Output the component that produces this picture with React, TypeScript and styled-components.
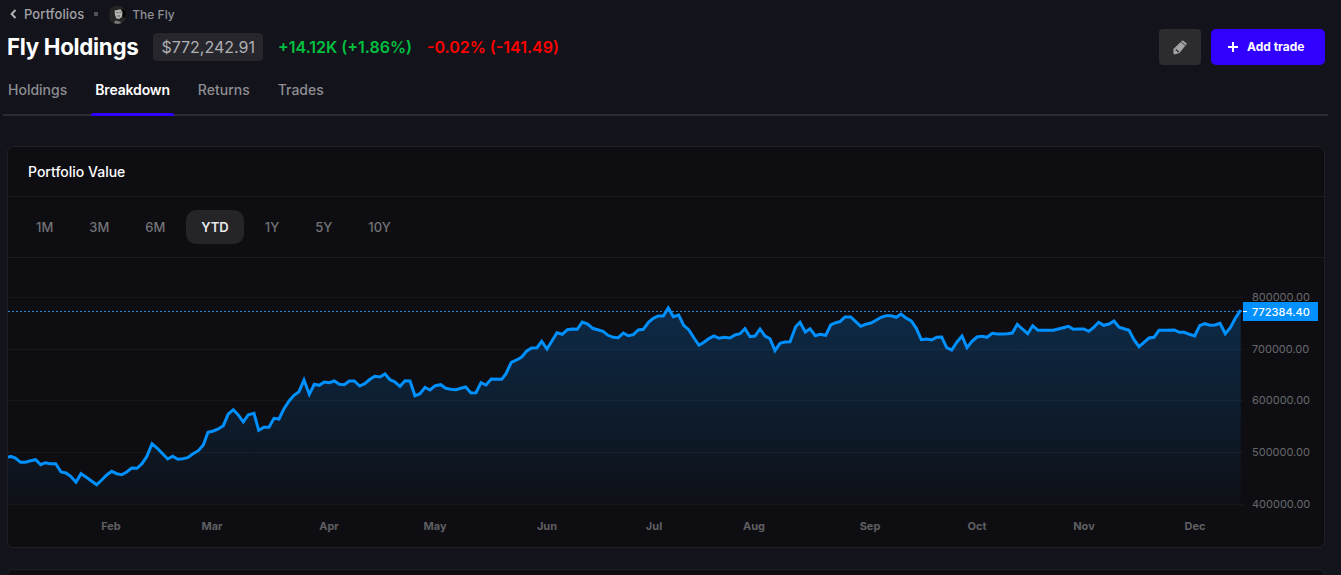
import React from "react";
import styled, { createGlobalStyle } from "styled-components";

const Global = createGlobalStyle`
  html, body { margin: 0; padding: 0; background: #13131b; overflow: hidden; }
  body { font-family: Inter, "Noto Sans", sans-serif; -webkit-font-smoothing: antialiased; }
  * { box-sizing: border-box; }
`;

const Page = styled.div`
  width: 1341px;
  height: 575px;
  overflow: hidden;
  background: #13131b;
  padding: 0 16px 0 7px;
`;
const Crumbs = styled.div`
  display: flex;
  align-items: center;
  height: 28px;
  padding-left: 3px;
  font-size: 12px;
  font-weight: 500;
  color: #a2a2a6;
`;
const CrumbLink = styled.span`
  margin-left: 7px;
  font-size: 13px;
  letter-spacing: 0.1px;
`;
const Dot = styled.span`
  width: 4px;
  height: 4px;
  border-radius: 1px;
  background: #55555b;
  margin: 0 10px 0 10px;
`;
const Owner = styled.span`
  margin-left: 5px;
  color: #8f8f94;
`;
const TitleRow = styled.div`
  display: flex;
  align-items: center;
  height: 38px;
`;
const Title = styled.h1`
  margin: 0 15px 0 0;
  font-size: 22.3px;
  line-height: 38px;
  font-weight: 700;
  letter-spacing: -0.3px;
  color: #fff;
  white-space: nowrap;
`;
const ValueBadge = styled.span`
  height: 28px;
  line-height: 28px;
  padding: 0 8px;
  border-radius: 4px;
  background: #26262c;
  color: #b0b0b4;
  font-size: 16px;
  margin-right: 15px;
`;
const Change = styled.span<{ $up?: boolean }>`
  font-size: 16px;
  font-weight: 600;
  color: ${(p) => (p.$up ? "#00c040" : "#ff0000")};
  margin-right: 15px;
  white-space: nowrap;
`;
const Actions = styled.div`
  margin-left: auto;
  display: flex;
  gap: 10px;
`;
const IconButton = styled.button`
  width: 42px;
  height: 36px;
  border: 0;
  border-radius: 4px;
  background: #2b2b30;
  display: flex;
  align-items: center;
  justify-content: center;
  padding: 0;
`;
const PrimaryButton = styled.button`
  width: 114px;
  height: 36px;
  border: 0;
  border-radius: 5px;
  background: #3200ff;
  color: #fff;
  font: 700 12px Inter, sans-serif;
  display: flex;
  align-items: center;
  gap: 9px;
  padding: 0 0 1px 17px;
`;
const Tabs = styled.nav`
  display: flex;
  margin: 7px -3px 0 -4px;
  padding-left: 1px;
  height: 43px;
  border-bottom: 2px solid #2c2c31;
`;
const Tab = styled.span<{ $active?: boolean }>`
  position: relative;
  padding: 0 4px 10px;
  margin: 0 20px 0 0;
  height: 43px;
  display: flex;
  align-items: center;
  font-size: 14px;
  font-weight: ${(p) => (p.$active ? 600 : 500)};
  letter-spacing: ${(p) => (p.$active ? "-0.15px" : "0")};
  color: ${(p) => (p.$active ? "#fff" : "#8d8d92")};
  ${(p) =>
    p.$active
      ? `&::after { content: ""; position: absolute; left: 0; right: 0; bottom: 0; height: 3px; border-radius: 2px 2px 0 0; background: #3200ff; }`
      : ""}
`;
const Card = styled.section`
  margin-top: 30px;
  width: 1318px;
  height: 402px;
  background: #0e0e12;
  border: 1px solid #1f1f26;
  border-radius: 6px;
  overflow: hidden;
`;
const CardHeader = styled.div`
  height: 50px;
  padding-left: 20px;
  display: flex;
  align-items: center;
  border-bottom: 1px solid #1b1b20;
  font-size: 14px;
  font-weight: 500;
  color: #fff;
`;
const Ranges = styled.div`
  height: 61px;
  padding: 0 13px;
  display: flex;
  align-items: center;
  gap: 6px;
  border-bottom: 1px solid #1b1b20;
`;
const Range = styled.span<{ $active?: boolean }>`
  height: 34px;
  line-height: 34px;
  padding: 0 15px;
  border-radius: 10px;
  font-size: 13px;
  font-weight: ${(p) => (p.$active ? 600 : 500)};
  background: ${(p) => (p.$active ? "#252528" : "transparent")};
  color: ${(p) => (p.$active ? "#e8e8ea" : "#737377")};
`;
const Chart = styled.svg`
  display: block;
  width: 1316px;
  height: 289px;
  font-family: Inter, sans-serif;
`;
const NextCard = styled.section`
  margin-top: 21px;
  width: 1318px;
  height: 40px;
  background: #0e0e12;
  border: 1px solid #1f1f26;
  border-radius: 6px;
`;

const a: number[][] = [[24,472],[32,469],[46,474],[62,487],[76,487],[92,482],[107,479],[122,494],[136,488],[150,491],[167,491],[183,516],[198,519],[212,529],[228,547],[243,521],[259,532],[290,554],[305,540],[320,525],[335,514],[350,521],[365,524],[380,516],[395,504],[411,505],[426,491],[440,470],[456,431],[472,445],[503,477],[518,469],[533,478],[548,476],[563,473],[578,462],[595,452],[610,435],[624,397],[640,393],[655,387],[670,377],[685,342],[700,329],[715,345],[730,366],[745,344],[762,340],[776,391],[792,382],[807,382],[822,355],[837,357],[852,326],[868,302],[882,286],[897,275],[912,240],[928,283],[943,253],[958,256],[973,246],[988,248],[1003,243],[1018,253],[1033,254],[1048,243],[1063,243],[1079,258],[1094,251],[1110,238],[1124,229],[1140,231],[1155,222],[1170,239],[1185,246],[1200,259],[1215,242],[1230,243],[1245,287]];
const b: number[][] = [[0,296],[15,277],[30,285],[46,272],[62,269],[77,280],[92,283],[108,284],[122,280],[137,276],[153,294],[168,293],[183,263],[198,270],[214,252],[245,253],[258,236],[274,202],[290,195],[305,186],[320,168],[335,159],[351,158],[365,139],[381,162],[411,113],[427,118],[442,104],[457,102],[472,103],[487,81],[503,87],[518,100],[533,104],[549,109],[564,121],[580,127],[595,128],[610,114],[625,122],[640,119],[655,105],[670,103],[686,81],[700,70],[715,63],[730,63],[745,39],[760,65],[776,60],[791,91],[806,104],[822,129],[837,151],[852,142],[868,130],[882,123],[897,130],[913,127],[930,129],[945,120],[960,116],[975,101],[990,125],[1005,123],[1020,102],[1035,123],[1050,131],[1065,167],[1080,145],[1095,141],[1110,140],[1127,95],[1140,82],[1156,111],[1170,101],[1186,122],[1200,118],[1217,121],[1232,90],[1247,83]];
const c: number[][] = [[0,80],[15,66],[32,66],[47,80],[62,94],[77,88],[93,84],[108,76],[123,67],[138,62],[153,62],[169,67],[183,57],[198,69],[214,78],[229,100],[244,134],[260,132],[275,135],[290,127],[305,126],[320,158],[335,165],[351,141],[366,123],[381,158],[396,139],[411,126],[426,124],[441,127],[457,115],[472,117],[487,117],[502,116],[517,114],[532,88],[547,102],[563,116],[578,92],[594,106],[609,106],[640,106],[655,102],[670,98],[685,94],[700,103],[716,102],[731,102],[746,109],[761,97],[776,82],[791,91],[807,87],[822,78],[837,97],[852,101],[867,106],[882,134],[897,155],[912,142],[927,129],[942,127],[957,106],[972,106],[1003,105],[1018,112],[1033,112],[1048,118],[1064,123],[1079,92],[1094,86],[1110,91],[1125,90],[1140,85],[1156,116],[1171,98],[1186,70],[1202,45]];

const pts = [
  ...a.map(([x, y]) => [x / 3, 300 + y / 3]),
  ...b.map(([x, y]) => [420 + x / 3, 295 + y / 3]),
  ...c.map(([x, y]) => [840 + x / 3, 295 + y / 3]),
].map(([x, y]) => `${x.toFixed(1)},${y.toFixed(1)}`);
const linePath = "M" + pts.join(" L");
const areaPath = `${linePath} L1240.7,504 L8,504 Z`;

const months: [string, number][] = [["Feb",111],["Mar",212],["Apr",329],["May",435],["Jun",547],["Jul",654],["Aug",754],["Sep",870],["Oct",977],["Nov",1084],["Dec",1195]];
const grid: [string, number][] = [["800000.00",297],["700000.00",349],["600000.00",400],["500000.00",452],["400000.00",504]];
const ranges = ["1M", "3M", "6M", "YTD", "1Y", "5Y", "10Y"];
const tabs = ["Holdings", "Breakdown", "Returns", "Trades"];

const Avatar = () => (
  <svg width="19" height="19" viewBox="0 0 19 19" aria-hidden="true">
    <defs>
      <clipPath id="av"><circle cx="9.5" cy="9.5" r="9.5" /></clipPath>
    </defs>
    <g clipPath="url(#av)">
      <rect width="19" height="19" fill="#151515" />
      <path d="M2 4 6 1h7l4 4 2 8-4 6H5L1 15z" fill="#262626" />
      <path d="M6.6 5.5 12.5 4.2 14.4 7.5 13.8 12 11 14 8.4 13.5 7 10z" fill="#b4b4b0" />
      <path d="M8.5 7.5h1.5M11.5 7.5h1.2M9.5 11h2.5" stroke="#3a3a3a" strokeWidth="0.8" />
      <path d="M5 19 7.5 15.5 12 16.5 14 19z" fill="#777" />
      <path d="M14.6 3.5 18 6.5 17.5 13 15 12z" fill="#050505" />
    </g>
  </svg>
);

const Chevron = () => (
  <svg width="7" height="10" viewBox="0 0 7 10" aria-hidden="true">
    <path d="M5.5 1 1.6 5l3.9 4" fill="none" stroke="#b5b5b8" strokeWidth="1.9" />
  </svg>
);

const Pencil = () => (
  <svg width="16" height="16" viewBox="0 0 16 16" aria-hidden="true">
    <path d="M10.6 1.2 15 4.8 7.4 14 2.6 15.4 1.5 14.2 1.4 9.9Z" fill="#a3a3a6" />
    <path d="M3.8 10.6 6.8 13" stroke="#2b2b30" strokeWidth="1.3" />
    <path d="M9.2 3 13.4 6.5" stroke="#2b2b30" strokeWidth="0.9" />
  </svg>
);

const Plus = () => (
  <svg width="10" height="10" viewBox="0 0 10 10" aria-hidden="true">
    <path d="M5 0v10M0 5h10" stroke="#fff" strokeWidth="2" />
  </svg>
);

export default function App() {
  return (
    <Page>
      <Global />
      <Crumbs>
        <Chevron />
        <CrumbLink>Portfolios</CrumbLink>
        <Dot />
        <Avatar />
        <Owner>The Fly</Owner>
      </Crumbs>
      <TitleRow>
        <Title>Fly Holdings</Title>
        <ValueBadge>$772,242.91</ValueBadge>
        <Change $up>+14.12K (+1.86%)</Change>
        <Change>-0.02% (-141.49)</Change>
        <Actions>
          <IconButton aria-label="Edit"><Pencil /></IconButton>
          <PrimaryButton><Plus />Add trade</PrimaryButton>
        </Actions>
      </TitleRow>
      <Tabs>
        {tabs.map((t) => (
          <Tab key={t} $active={t === "Breakdown"}>{t}</Tab>
        ))}
      </Tabs>
      <Card>
        <CardHeader>Portfolio Value</CardHeader>
        <Ranges>
          {ranges.map((r) => (
            <Range key={r} $active={r === "YTD"}>{r}</Range>
          ))}
        </Ranges>
        <Chart viewBox="8 258 1316 289">
          <defs>
            <linearGradient id="area" gradientUnits="userSpaceOnUse" x1="0" y1="308" x2="0" y2="504">
              <stop offset="0" stopColor="#0a84f0" stopOpacity="0.24" />
              <stop offset="1" stopColor="#0a84f0" stopOpacity="0.02" />
            </linearGradient>
          </defs>
          {grid.map(([label, y]) => (
            <line key={label} x1="8" x2="1243" y1={y + 0.5} y2={y + 0.5} stroke="#17171c" />
          ))}
          <path d={areaPath} fill="url(#area)" />
          <line x1="8" x2="1243" y1="311.5" y2="311.5" stroke="#2288dd" strokeDasharray="2 2" />
          <path d={linePath} fill="none" stroke="#0090ff" strokeWidth="3" strokeLinejoin="miter" />
          {grid.map(([label, y]) => (
            <text key={label} x="1252" y={y + 4} fontSize="11" fill="#68686c">{label}</text>
          ))}
          <rect x="1243" y="302" width="75" height="19" fill="#0090ff" />
          <line x1="1243" x2="1247" y1="311.5" y2="311.5" stroke="#fff" />
          <text x="1252" y="315.5" fontSize="11" fontWeight="500" fill="#fff">772384.40</text>
          {months.map(([m, x]) => (
            <text key={m} x={x} y="530" fontSize="11" fontWeight="700" textAnchor="middle" fill="#5f5f63">{m}</text>
          ))}
        </Chart>
      </Card>
      <NextCard />
    </Page>
  );
}
